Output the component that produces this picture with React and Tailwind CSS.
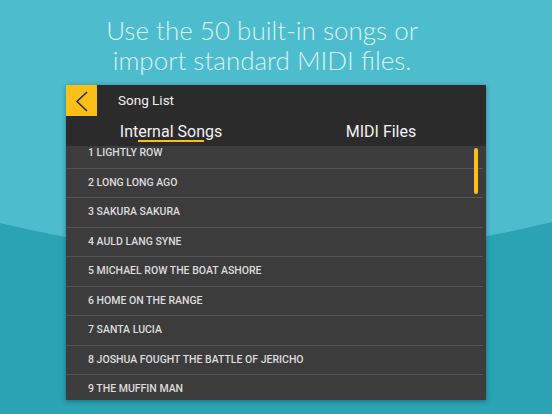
import React from 'react';

const songs = [
  '1 LIGHTLY ROW',
  '2 LONG LONG AGO',
  '3 SAKURA SAKURA',
  '4 AULD LANG SYNE',
  '5 MICHAEL ROW THE BOAT ASHORE',
  '6 HOME ON THE RANGE',
  '7 SANTA LUCIA',
  '8 JOSHUA FOUGHT THE BATTLE OF JERICHO',
  '9 THE MUFFIN MAN',
];

const Backdrop = () => (
  <svg className="absolute inset-0" width="552" height="414" viewBox="0 0 552 414">
    <rect width="552" height="414" fill="#4dbdce" />
    <path d="M0 223 Q276 290 552 222 L552 414 L0 414 Z" fill="#2aa3b3" />
  </svg>
);

const App = () => {
  return (
    <div className="relative w-[552px] h-[414px] overflow-hidden">
      <Backdrop />
      <div className="relative flex flex-col">
        <h1
          className="pt-[15px] pr-[28px] text-center text-[26px] leading-[30px] font-light text-[#dcf2f5]"
          style={{ fontFamily: 'Lato, "Liberation Sans", sans-serif' }}
        >
          Use the 50 built-in songs or
          <br />
          import standard MIDI files.
        </h1>

        <div
          className="mt-[10px] ml-[66px] w-[420px] h-[315px] flex flex-col overflow-hidden shadow-[0_1px_5px_rgba(0,0,0,0.35)]"
          style={{ fontFamily: 'Roboto, "Noto Sans", sans-serif' }}
        >
          <div className="bg-[#2b2b2b]">
            <div className="flex items-center h-[31px]">
              <div className="w-[31px] h-[31px] bg-[#fbbf16] flex items-center justify-center">
                <svg width="31" height="31" viewBox="0 0 31 31">
                  <path d="M21 7 L11 16.5 L21 26" fill="none" stroke="#2b2b2b" strokeWidth="1.6" />
                </svg>
              </div>
              <span className="ml-[21px] text-[13.5px] text-[#f0f0f0]">Song List</span>
            </div>
            <div className="flex h-[30px]">
              <div className="flex-1 flex justify-center">
                <div className="relative text-[16px] leading-[32px] text-[#f2f2f2]">
                  Internal Songs
                  <div className="absolute left-1/2 -translate-x-1/2 bottom-[4px] w-[66px] h-[2px] bg-[#fbbf16]" />
                </div>
              </div>
              <div className="flex-1 flex justify-center">
                <div className="text-[16px] leading-[32px] text-[#f2f2f2]">MIDI Files</div>
              </div>
            </div>
          </div>

          <div className="relative flex-1 bg-[#3c3c3c] overflow-hidden">
            <div className="-mt-[7px] flex flex-col">
              {songs.map((s) => (
                <div
                  key={s}
                  className="h-[29.5px] flex items-center pl-[22px] border-b border-[#555555] mr-[3px] text-[10.5px] font-medium text-[#dddddd]"
                >
                  {s}
                </div>
              ))}
            </div>
            <div className="absolute left-[408px] top-[2px] w-[4px] h-[46px] rounded-full bg-[#fbbf16]" />
          </div>
        </div>
      </div>
    </div>
  );
};

export default App;
